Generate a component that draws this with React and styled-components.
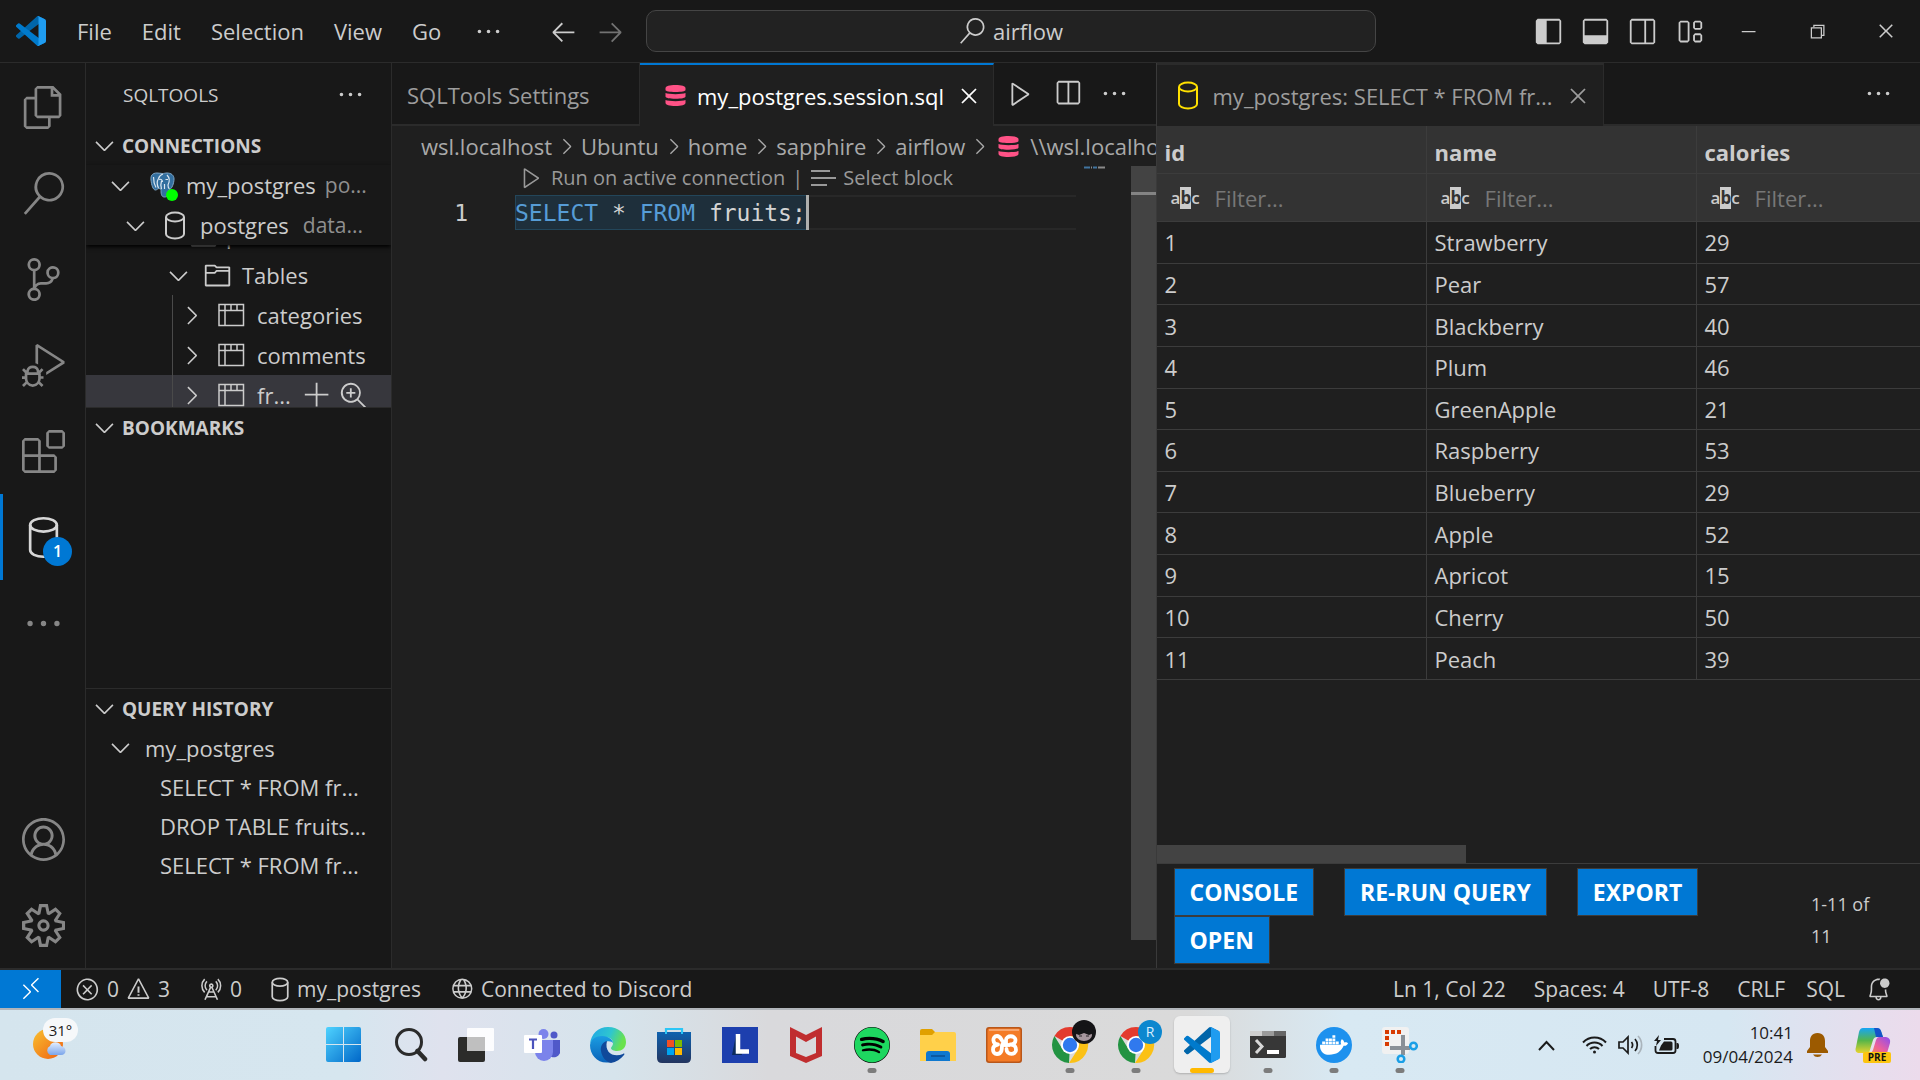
import React from 'react';
import styled, { createGlobalStyle, css } from 'styled-components';
import {
  VscAccount, VscAdd, VscArrowLeft, VscArrowRight, VscBellDot, VscChevronDown, VscChevronRight,
  VscChromeClose, VscChromeMinimize, VscChromeRestore, VscClose, VscDebugAlt,
  VscEllipsis, VscError, VscExtensions, VscFiles, VscFolder, VscGlobe, VscLayout, VscLayoutPanel,
  VscLayoutSidebarLeft, VscLayoutSidebarRightOff, VscPlay, VscRadioTower, VscRemote, VscSearch,
  VscSettingsGear, VscSourceControl, VscSplitHorizontal, VscWarning, VscZoomIn,
} from 'react-icons/vsc';
import { FaDocker, FaSpotify } from 'react-icons/fa';

const line = '#2b2b2b';
const dark = '#181818';
const editor = '#1f1f1f';
const accent = '#0078d4';
const text = '#cccccc';
const muted = '#9d9d9d';

const Global = createGlobalStyle`
  * { box-sizing: border-box; }
  body { margin: 0; background: ${dark}; color: ${text}; font-family: "Open Sans", "Noto Sans", sans-serif; font-size: 22px; overflow: hidden; }
  button, input { font: inherit; color: inherit; background: none; border: 0; padding: 0; margin: 0; }
  h2, h3, p, ul, nav { margin: 0; padding: 0; font-size: inherit; font-weight: inherit; }
  svg { display: block; flex: none; }
`;

const Screen = styled.div`
  height: 100vh;
  display: flex;
  flex-direction: column;
`;

/* ---------- title bar ---------- */
const TitleBar = styled.header`
  height: 63px;
  flex: none;
  display: flex;
  align-items: center;
  border-bottom: 1px solid ${line};
`;
const TitleSide = styled.div`
  flex: 1;
  display: flex;
  align-items: center;
  justify-content: ${(p) => (p.$end ? 'flex-end' : 'flex-start')};
`;
const Logo = styled.div`
  padding: 0 16px;
`;
const MenuItem = styled.button`
  padding: 0 ${(p) => (p.$icon ? 18 : 15)}px;
  height: 40px;
  display: flex;
  align-items: center;
`;
const TitleCenter = styled.div`
  display: flex;
  align-items: center;
  margin-right: 4px;
`;
const NavButton = styled.button`
  width: 47px;
  display: flex;
  justify-content: center;
  opacity: ${(p) => (p.disabled ? 0.5 : 1)};
`;
const CommandCenter = styled.button`
  width: 38vw;
  height: 42px;
  margin-left: 12px;
  display: flex;
  align-items: center;
  justify-content: center;
  gap: 8px;
  border: 1px solid #454545;
  border-radius: 10px;
  background: #222222;
`;
const LayoutButton = styled.button`
  width: 47px;
  display: flex;
  justify-content: center;
`;
const WindowButton = styled.button`
  width: 69px;
  display: flex;
  justify-content: center;
`;

/* ---------- work area ---------- */
const Work = styled.main`
  flex: 1;
  min-height: 0;
  display: flex;
`;
const ActivityBar = styled.nav`
  width: 86px;
  flex: none;
  display: flex;
  flex-direction: column;
  border-right: 1px solid ${line};
`;
const ActivityList = styled.div`
  padding-top: 1px;
  flex: 1;
  display: flex;
  flex-direction: column;
`;
const ActivityButton = styled.button`
  height: 86px;
  display: flex;
  align-items: center;
  justify-content: center;
  color: ${(p) => (p.$active ? '#d7d7d7' : '#868686')};
  border-left: 3px solid ${(p) => (p.$active ? accent : 'transparent')};
  padding-right: 2px;
  position: relative;
`;
const Badge = styled.span`
  position: absolute;
  left: 40px;
  top: 43px;
  width: 29px;
  height: 29px;
  border-radius: 50%;
  background: ${accent};
  color: #fff;
  font-size: 16px;
  font-weight: 600;
  line-height: 29px;
  text-align: center;
`;
const SideBar = styled.aside`
  width: 306px;
  flex: none;
  display: flex;
  flex-direction: column;
  border-right: 1px solid ${line};
`;
const SideTitle = styled.div`
  height: 63px;
  flex: none;
  display: flex;
  align-items: center;
  justify-content: space-between;
  padding: 0 26px 0 37px;
  font-size: 19px;
`;
const Pane = styled.section`
  flex: ${(p) => p.$flex || '1'};
  min-height: 0;
  overflow: hidden;
  border-top: ${(p) => (p.$first ? '0' : `1px solid ${line}`)};
`;
const PaneHeader = styled.h3`
  height: 39px;
  display: flex;
  align-items: center;
  padding-left: 4px;
  gap: 3px;
  font-size: 19px;
  font-weight: 700;
`;
const TreeRow = styled.div`
  height: 40px;
  display: flex;
  align-items: center;
  white-space: nowrap;
  gap: ${(p) => p.$gap || 9}px;
  padding-left: ${(p) => p.$indent}px;
  background: ${(p) => (p.$selected ? '#37373d' : 'transparent')};
`;
const History = styled.div`
  ${TreeRow} { height: 39px; }
`;
const Detail = styled.span`
  color: #8f8f8f;
  font-size: 21px;
`;
const RowActions = styled.div`
  display: flex;
  gap: 7px;
  button { display: flex; }
`;
const Sticky = styled.div`
  box-shadow: 0 2px 4px #000;
  position: relative;
  background: ${dark};
`;
const Peek = styled.div`
  height: 10px;
  overflow: hidden;
  display: flex;
  flex-direction: column;
  justify-content: flex-end;
  ${TreeRow} { flex: none; }
`;
const Children = styled.div`
  margin-left: 86px;
  border-left: 1px solid #4a4a4a;
`;
const GuideWrap = styled.div`
  background: linear-gradient(#37373d, #37373d) 0 80px / 100% 40px no-repeat;
`;

/* ---------- editors ---------- */
const Group = styled.section`
  flex: 1 1 0;
  min-width: 0;
  display: flex;
  flex-direction: column;
  background: ${editor};
  border-left: ${(p) => (p.$second ? `1px solid #3a3a3a` : '0')};
`;
const TabBar = styled.div`
  height: 63px;
  flex: none;
  display: flex;
  background: ${dark};
`;
const Tab = styled.div`
  display: flex;
  align-items: center;
  white-space: nowrap;
  height: 63px;
  border-right: 1px solid ${line};
  color: ${muted};
  ${(p) => p.$kind === 'plain' && css`
    width: 248px;
    padding: 2px 0 0 15px;
    border-bottom: 2px solid ${line};
  `}
  ${(p) => p.$kind === 'active' && css`
    width: 354px;
    padding: 0 11px 0 25px;
    gap: 11px;
    background: ${editor};
    color: #fff;
    border-top: 2px solid ${accent};
  `}
  ${(p) => p.$kind === 'result' && css`
    width: 447px;
    padding: 0 11px 0 17px;
    gap: 11px;
    background: ${editor};
    border-top: 2px solid ${line};
  `}
`;
const TabClose = styled.button`
  margin-left: auto;
  display: flex;
`;
const TabActions = styled.div`
  flex: 1;
  display: flex;
  align-items: center;
  justify-content: flex-end;
  gap: 18px;
  padding-right: 27px;
  border-bottom: 2px solid ${line};
  button { display: flex; }
`;
const Crumbs = styled.nav`
  height: 40px;
  flex: none;
  display: flex;
  align-items: center;
  gap: 2px;
  padding-left: 29px;
  overflow: hidden;
  white-space: nowrap;
  color: #a9a9a9;
`;
const CrumbFile = styled.span`
  display: flex;
  align-items: center;
  gap: 11px;
  padding-left: 4px;
`;
const EditorBody = styled.div`
  flex: 1;
  min-height: 0;
  display: flex;
`;
const Code = styled.div`
  flex: 1;
  min-width: 0;
`;
const Lens = styled.div`
  height: 29px;
  display: flex;
  align-items: center;
  gap: 7px;
  padding: 0 0 6px 127px;
  font-size: 20px;
  color: #999999;
  white-space: nowrap;
`;
const LensLink = styled.button`
  display: flex;
  align-items: center;
  gap: 7px;
`;
const CodeLine = styled.div`
  display: flex;
  height: 35px;
  font: 23px/36px "DejaVu Sans Mono", monospace;
`;
const LineNo = styled.span`
  width: 76px;
  text-align: right;
  margin-right: 47px;
`;
const LineBody = styled.div`
  flex: 1;
  display: flex;
  box-shadow: inset 0 2px #282828, inset 0 -2px #282828;
`;
const Selected = styled.span`
  white-space: pre;
  background: #1e2f3b;
  box-shadow: inset 0 1px #23465a, inset 0 -1px #23465a, inset 1px 0 #23465a;
  color: #d4d4d4;
  border-right: 3px solid #aeafad;
`;
const Keyword = styled.span`
  color: #569cd6;
`;
const Minimap = styled.div`
  width: 55px;
  padding-left: 8px;
`;
const VScroll = styled.div`
  width: 25px;
  margin-bottom: 28px;
  background: #434343;
  padding-top: 26px;
`;
const Mark = styled.div`
  height: 3px;
  background: #848484;
`;

/* ---------- result table ---------- */
const Results = styled.div`
  flex: 1;
  min-height: 0;
  overflow: hidden;
`;
const Table = styled.table`
  width: 100%;
  height: 554px;
  table-layout: fixed;
  border-collapse: separate;
  border-spacing: 0;
  text-align: left;
  line-height: 30px;
  th, td {
    padding: 0 8px;
    border-right: 1px solid #3c3c3c;
    border-bottom: 1px solid #3c3c3c;
  }
  th:last-child, td:last-child { border-right: 0; }
  thead th { background: #333333; height: 48px; font-weight: 700; padding-top: 4px; }
  thead tr + tr th { padding-top: 0; }
`;
const Col = styled.col`
  width: 270px;
`;
const FilterBox = styled.label`
  display: flex;
  align-items: center;
  gap: 15px;
  padding-left: 6px;
  font-weight: 400;
`;
const FilterInput = styled.input`
  width: 100px;
  min-width: 0;
  &::placeholder { color: #777777; opacity: 1; }
`;
const Abc = styled.span`
  display: flex;
  font-size: 17px;
  font-weight: 600;
  line-height: 22px;
  b { background: ${text}; color: #333333; font-weight: 700; }
`;
const HScroll = styled.div`
  height: 18px;
  width: 309px;
  flex: none;
  background: #434343;
`;
const Footer = styled.footer`
  flex: none;
  display: flex;
  align-items: center;
  padding: 4px 17px;
  border-top: 1px solid #3c3c3c;
`;
const Actions = styled.div`
  flex: 1;
  display: flex;
  flex-wrap: wrap;
  column-gap: 30px;
`;
const Action = styled.button`
  height: 48px;
  padding: 0 15px;
  border: 1px solid #3c3c3c;
  background: ${accent};
  color: #fff;
  font-size: 23px;
  font-weight: 700;
`;
const Count = styled.span`
  width: 92px;
  padding: 8px 16px 0 0;
  font-size: 18px;
  line-height: 32px;
`;

/* ---------- status bar ---------- */
const StatusBar = styled.div`
  height: 40px;
  flex: none;
  display: flex;
  align-items: stretch;
  border-top: 2px solid ${line};
  font-size: 21px;
`;
const Remote = styled.button`
  width: 61px;
  display: flex;
  align-items: center;
  justify-content: center;
  background: ${accent};
  color: #fff;
`;
const Status = styled.button`
  display: flex;
  align-items: center;
  gap: 7px;
  padding: 0 14px 0 ${(p) => (p.$tight ? 7 : 14)}px;
`;
const StatusRight = styled.div`
  margin-left: auto;
  display: flex;
  padding-right: 15px;
`;

/* ---------- taskbar ---------- */
const TaskBar = styled.footer`
  height: 72px;
  flex: none;
  display: grid;
  grid-template-columns: 316px auto 1fr;
  align-items: stretch;
  border-top: 2px solid #b1b5ba;
  color: #1b1b1b;
  background: linear-gradient(90deg, #d5e5ee 0%, #d6e6ef 18%, #dfe2ee 23%, #d6e4ec 32%, #d9d9dc 40%, #dadada 62%, #d8e9f3 70%, #d6e7f2 90%, #ecdbec 100%);
`;
const Weather = styled.button`
  width: 60px;
  margin-left: 26px;
  display: flex;
  align-items: center;
  position: relative;
`;
const Temp = styled.span`
  position: absolute;
  left: 17px;
  top: 8px;
  width: 35px;
  height: 24px;
  border-radius: 12px;
  background: #f6f8fa;
  font-size: 15px;
  line-height: 24px;
  text-align: center;
`;
const Apps = styled.div`
  display: flex;
  padding: 6px 0;
  gap: 10px;
`;
const AppButton = styled.button`
  width: 56px;
  height: 57px;
  border-radius: 6px;
  display: flex;
  align-items: center;
  justify-content: center;
  position: relative;
  background: ${(p) => (p.$active ? '#efefef' : 'transparent')};
  box-shadow: ${(p) => (p.$active ? '0 1px 2px #0003' : 'none')};
`;
const Dot = styled.i`
  position: absolute;
  bottom: 0;
  left: 50%;
  transform: translateX(-50%);
  width: ${(p) => (p.$wide ? 24 : 9)}px;
  height: 5px;
  border-radius: 3px;
  background: ${(p) => (p.$wide ? '#ffb900' : '#7c7c7c')};
`;
const Tray = styled.div`
  display: flex;
  align-items: center;
  justify-content: flex-end;
  padding-right: 29px;
`;
const TrayIcons = styled.div`
  display: flex;
  align-items: center;
  gap: 11px;
  margin-right: 24px;
`;
const Chevron = styled.button`
  padding-right: 16px;
`;
const Clock = styled.div`
  font-size: 17px;
  line-height: 24px;
  text-align: right;
  margin-right: 14px;
`;
const Copilot = styled.button`
  margin-left: 27px;
`;

/* ---------- drawings ---------- */
const CodeLogo = ({ size }) => (
  <svg width={size} height={size} viewBox="0 0 100 100" aria-hidden="true">
    <path fill="#0065a9" d="M96.5 10.8 75.9.9a6.2 6.2 0 0 0-7.1 1.200L1.300 63.600a4.200 4.200 0 0 0 0 6.100l5.500 5a4.200 4.200 0 0 0 5.300.3l81.200-61.700c2.800-2 6.700-.1 6.700 3.400v-.3a6.300 6.300 0 0 0-3.500-5.600Z" />
    <path fill="#007acc" d="m96.500 89.200-20.600 9.900a6.200 6.200 0 0 1-7.100-1.200L1.300 36.400a4.200 4.200 0 0 1 0-6.100l5.500-5a4.200 4.200 0 0 1 5.300-.3l81.200 61.700c2.800 2 6.700.1 6.700-3.400v.3a6.300 6.300 0 0 1-3.500 5.600Z" />
    <path fill="#1f9cf0" d="M75.900 99.100a6.200 6.200 0 0 1-7.100-1.200c2.300 2.300 6.200.7 6.200-2.600V4.700c0-3.300-3.900-4.900-6.200-2.600a6.200 6.200 0 0 1 7.100-1.200l20.600 9.900a6.200 6.200 0 0 1 3.500 5.600v67.200c0 2.400-1.400 4.600-3.500 5.600Z" />
  </svg>
);
const Cylinder = ({ w = 22, h = 29, color = 'currentColor', stroke = 2 }) => (
  <svg width={w} height={h} viewBox="0 0 22 29" fill="none" stroke={color} strokeWidth={stroke} aria-hidden="true">
    <ellipse cx="11" cy="6" rx="9" ry="4.500" />
    <path d="M2 6v17c0 2.500 4 4.500 9 4.500s9-2 9-4.500V6" />
  </svg>
);
const ElephantIcon = () => (
  <svg width="25" height="26" viewBox="0 0 25 26" aria-hidden="true">
    <path fill="#336f9f" stroke="#7fa6c6" strokeWidth="1" d="M7 1C2 1 .5 4 1 8c.5 5 2 10 4.500 10 1.500 0 2-1.500 3.500-1.500.5 0 1 .5 2 .5 0 4 0 8 3.500 8s4-3 4.500-7c3-1 5-7 5-11 0-4-3-6-7-6-2 0-3 .5-4.500.5S9 1 7 1Z" />
    <path fill="none" stroke="#dbe7f1" strokeWidth="1.200" d="M8.500 16c-1.500-3-1.500-7 0-9.500C9.500 3.500 11 2.500 13 2M11.500 17c-1-3-1-5 0-8M17 3c3 3 2.500 7 1 10 0 2 .5 3.500 1.500 4M9 7.500c2-.8 3.500.5 3.500 2.500M15.500 7.500h2.500M3.500 5c0 4 1 8 2.500 10.500M14.500 12v5" />
  </svg>
);
const SqlIcon = () => (
  <svg width="21" height="21" viewBox="0 0 20 21" fill="#ff5286" aria-hidden="true">
    <path d="M0 3c0-1.700 4-3 10-3s10 1.300 10 3v2c0 1.300-4 2-10 2S0 6.300 0 5z" />
    <path d="M0 8c3 1.500 17 1.500 20 0v3.500c0 1.500-4 2.200-10 2.200S0 13 0 11.500z" />
    <path d="M0 15c3 1.500 17 1.500 20 0v3c0 1.700-4 3-10 3S0 19.700 0 18z" />
  </svg>
);
const TableIcon = () => (
  <svg width="27" height="24" viewBox="0 0 27 24" fill="none" stroke="currentColor" strokeWidth="1.500" aria-hidden="true">
    <path d="M1 1.500h24.500v21H1zM1 7.500h24.500M7 1.500v21M13 1.500v6M19 1.500v6" />
  </svg>
);
const LinesIcon = () => (
  <svg width="26" height="18" viewBox="0 0 26 18" stroke="currentColor" strokeWidth="2" aria-hidden="true">
    <path d="M1 2h19M1 9h25M1 16h16" />
  </svg>
);
const MapLine = () => (
  <svg width="21" height="3" viewBox="0 0 21 3" aria-hidden="true">
    <path d="M0 1.500h6M9 1.500h4" stroke="#41749f" strokeWidth="2" />
    <path d="M7 1.500h1M14 1.500h7" stroke="#8a8a8a" strokeWidth="2" />
  </svg>
);
const Pg = styled.span`
  position: relative;
  margin: 0 2px 0 6px;
`;
const Online = styled.i`
  position: absolute;
  right: -3px;
  bottom: -3px;
  width: 12px;
  height: 12px;
  border-radius: 50%;
  background: #00ff00;
`;
const WeatherIcon = () => (
  <svg width="40" height="40" viewBox="0 0 40 40" aria-hidden="true">
    <defs>
      <linearGradient id="sun" x1="0" y1="0" x2="1" y2="1"><stop offset="0" stopColor="#f8c12f" /><stop offset="1" stopColor="#ef5f12" /></linearGradient>
      <linearGradient id="cloud" x1="0" y1="0" x2="0" y2="1"><stop offset="0" stopColor="#e3efff" /><stop offset="1" stopColor="#7ba5ea" /></linearGradient>
    </defs>
    <circle cx="22" cy="19" r="15" fill="url(#sun)" />
    <path d="M24 30a5 5 0 0 1 0-9c1-5 10-5 11 0 6 1 6 9 0 9z" fill="url(#cloud)" />
  </svg>
);
const icon36 = { width: 36, height: 36, viewBox: '0 0 36 36', 'aria-hidden': true };
const StartIcon = () => (
  <svg {...icon36}>
    <defs><linearGradient id="win" x1="0" y1="0" x2="1" y2="1"><stop offset="0" stopColor="#4fd3ff" /><stop offset="1" stopColor="#0067c8" /></linearGradient></defs>
    <path fill="url(#win)" d="M2 0h15v17H0V2q0-2 2-2ZM18 0h15q2 0 2 2v15H18ZM0 18h17v17H2q-2 0-2-2ZM18 18h17v15q0 2-2 2H18Z" />
  </svg>
);
const FindIcon = () => (
  <svg {...icon36} fill="none" stroke="#2b2b2b"><circle cx="17" cy="15" r="12.500" strokeWidth="3" /><path d="m25.500 24 7.500 8" strokeWidth="4.500" strokeLinecap="round" /></svg>
);
const TaskViewIcon = () => (
  <svg {...icon36}>
    <rect x="0" y="10" width="27" height="25" rx="2" fill="#2c2c2a" />
    <rect x="9" y="1" width="27" height="23" rx="1" fill="#fff" opacity=".9" />
    <rect x="9" y="10" width="18" height="14" fill="#bfbfbf" />
  </svg>
);
const TeamsIcon = () => (
  <svg {...icon36}>
    <circle cx="19.500" cy="7" r="5" fill="#7b83eb" /><circle cx="30" cy="8" r="3.500" fill="#5059c9" />
    <path d="M24 13h12v9a6 6 0 0 1-12 4z" fill="#5059c9" />
    <path d="M11 13h18v12a9 9 0 0 1-18 0z" fill="#7b83eb" />
    <rect x="0" y="8" width="18" height="18" rx="1" fill="#fff" />
    <path d="M5 12.500h8M9 12.500v9.500" stroke="#4b53bc" strokeWidth="2.200" />
  </svg>
);
const EdgeIcon = () => (
  <svg {...icon36}>
    <defs>
      <linearGradient id="e1" x1="0" y1="0" x2="1" y2=".3"><stop offset="0" stopColor="#1ea5e8" /><stop offset=".6" stopColor="#2fc6cf" /><stop offset="1" stopColor="#69e24d" /></linearGradient>
      <linearGradient id="e2" x1="0" y1="0" x2="0" y2="1"><stop offset="0" stopColor="#1b9de2" /><stop offset="1" stopColor="#0a62b8" /></linearGradient>
    </defs>
    <path fill="url(#e1)" d="M0 17C1 7 8 0 18 0c11 0 18 7 18 15 0 6-4 9-9 9-3 0-6-1-6-3 0-1 2-2 2-5 0-4-4-6-9-6C7 10 2 13 0 17Z" />
    <path fill="url(#e2)" d="M0 18c1-6 6-9 12-9 7 0 11 4 11 7-1-2-9-4-10 4-1 6 2 12 8 15C9 38 0 29 0 18Z" />
    <path fill="#10499a" d="M17 14c-4 1-7 5-6 10 1 6 5 11 10 12 5-1 10-4 13-8 1-1 0-2-1-1-9 4-19-1-16-13Z" />
  </svg>
);
const StoreIcon = () => (
  <svg {...icon36}>
    <defs><linearGradient id="st" x1="0" y1="0" x2="0" y2="1"><stop offset="0" stopColor="#0f62af" /><stop offset="1" stopColor="#23355f" /></linearGradient></defs>
    <path d="M10 7V2h16v5" fill="none" stroke="#2cc6f6" strokeWidth="2.200" />
    <path fill="url(#st)" d="M1 5h34v26q0 5-5 5H6q-5 0-5-5z" />
    <path d="M10 2v5M26 2v5" stroke="#2cc6f6" strokeWidth="2" />
    <path fill="#f25022" d="M11 13h7v7h-7z" /><path fill="#7fba00" d="M19 13h7v7h-7z" /><path fill="#00a4ef" d="M11 21h7v7h-7z" /><path fill="#ffb900" d="M19 21h7v7h-7z" />
  </svg>
);
const LIcon = () => (
  <svg {...icon36}><path fill="#1d3fae" d="M0 0h36v36H0z" /><path fill="#0b2b5e" d="m14 8-4 20h10z" /><path fill="none" stroke="#fff" strokeWidth="4.500" d="M16 7v17.500h11" /></svg>
);
const ShieldIcon = () => (
  <svg {...icon36}><path fill="#c02d2f" fillRule="evenodd" d="m2 0 16 8 16-8v29l-16 7-16-7zM8 9.500V26l10 4 10-4V9.500L18 15z" /></svg>
);
const FolderIcon = () => (
  <svg {...icon36}>
    <path fill="#e0a000" d="M0 4q0-2 2-2h10l3 3v5H0z" /><path fill="#ffd04a" d="M0 8h12l3-3h19q2 0 2 2v27H0z" />
    <path fill="#0f78cf" d="M6 34v-7q0-3 3-3h18q3 0 3 3v7z" /><path d="M11 29h14" stroke="#0b4f92" strokeWidth="1.500" />
  </svg>
);
const XamppIcon = () => (
  <svg {...icon36}>
    <rect width="36" height="36" rx="3" fill="#b9571a" /><rect x="1.500" y="1.500" width="33" height="33" rx="2" fill="#f47b26" />
    <path d="M3 2h30v2H3z" fill="#f9a66e" />
    <path d="M12 17.500c-6 0-6-8.500-1-8.500 4 0 4 4 6.500 6.500M12 17.500c-7 1-6 9.500-1 9.500 5 0 5-5 5-9M20 18v-5c0-5 9.500-5 9.500 0 0 3-2.500 4.500-6 4.500 6 0 6.500 3 6.500 5.500 0 5-9.500 5.500-9.500-1" fill="none" stroke="#fff" strokeWidth="3.800" strokeLinecap="round" />
    <path d="M15 18h9" stroke="#fff" strokeWidth="3.800" />
  </svg>
);
const ChromeIcon = ({ avatar }) => (
  <svg width="36" height="36" viewBox="0 0 36 36" overflow="visible" aria-hidden="true">
    <path fill="#e33b2e" d="M18 18 2.400 9a18 18 0 0 1 31.200 0z" />
    <path fill="#229342" d="M18 18 17 36A18 18 0 0 1 2.400 9l8 13z" />
    <path fill="#fbc116" d="M18 9h15.600A18 18 0 0 1 17 36l9-14z" />
    <circle cx="18" cy="18" r="9" fill="#fff" /><circle cx="18" cy="18" r="7.200" fill="#3079ee" />
    {avatar === 'R' ? (
      <g><circle cx="32" cy="5" r="12" fill="#0c87cf" /><text x="32" y="10" fontSize="14" fill="#d9f0ff" textAnchor="middle">R</text></g>
    ) : (
      <g><circle cx="32" cy="5" r="12" fill="#151417" /><ellipse cx="32" cy="8" rx="8" ry="6" fill="#a8979f" /><path fill="#151417" d="M22 6c2-10 18-10 20 0l-5 2-5-2-5 2z" /><path stroke="#2c262b" strokeWidth="1" d="M27 9h3M34 9h3" /></g>
    )}
  </svg>
);
const TerminalIcon = () => (
  <svg {...icon36}>
    <rect y="4" width="36" height="27" rx="1.500" fill="#373737" /><path fill="#cfcfcf" d="M0 4h12v5H0z" /><path fill="#9b9b9b" d="M12 4h12v5H12z" /><path fill="#666" d="M24 4h12v5H24z" />
    <path d="m6 13 6 6.500L6 26" fill="none" stroke="#d8d8d8" strokeWidth="3" /><path d="M17 25h12" stroke="#fff" strokeWidth="4" />
  </svg>
);
const Disc = styled.span`
  width: 36px;
  height: 36px;
  border-radius: 50%;
  display: flex;
  align-items: center;
  justify-content: center;
  background: ${(p) => p.$bg};
  color: ${(p) => p.$fg};
`;
const SnipIcon = () => (
  <svg {...icon36}>
    <rect width="27" height="27" rx="3" fill="#f1f1f1" />
    <path d="M3 5h16M5 9v10" fill="none" stroke="#d83b01" strokeWidth="4" strokeDasharray="4 2" />
    <path d="M8 21h20M21 8v20" stroke="#8a9097" strokeWidth="4" />
    <circle cx="31.500" cy="19" r="3.300" fill="none" stroke="#1a9fe6" strokeWidth="2.500" /><circle cx="19" cy="32" r="3.300" fill="none" stroke="#1a9fe6" strokeWidth="2.500" />
  </svg>
);
const CopilotIcon = () => (
  <svg width="36" height="36" viewBox="0 0 36 36" aria-hidden="true">
    <defs>
      <linearGradient id="c1" x1="0" y1="0" x2="0" y2="1"><stop offset="0" stopColor="#16a5f5" /><stop offset=".5" stopColor="#56b64a" /><stop offset="1" stopColor="#e8d32e" /></linearGradient>
      <linearGradient id="c2" x1="1" y1="0" x2="0" y2="1"><stop offset="0" stopColor="#8b4df0" /><stop offset=".6" stopColor="#ec5f9d" /><stop offset="1" stopColor="#f98a4b" /></linearGradient>
    </defs>
    <path fill="url(#c1)" d="M8 1h14q3 0 4 3l2 6h-6q-3 0-4 3l-4 13H5q-6 0-4-6L4 5q1-4 4-4z" />
    <path fill="#1452c9" d="M19 1h3q3 0 4 3l2 6h-7z" />
    <path fill="url(#c2)" d="M24 10h7q5 1 4 6l-3 10H15q2 0 3-3l3-10q1-3 3-3z" />
    <rect x="8" y="25" width="28" height="11" rx="2" fill="#fcc510" />
    <text x="22" y="34" fontSize="10" fontWeight="700" textAnchor="middle" fill="#111">PRE</text>
  </svg>
);
const tray = { fill: 'none', stroke: '#1b1b1b', strokeWidth: 2, 'aria-hidden': true };
const UpIcon = () => <svg width="17" height="11" viewBox="0 0 17 11" {...tray}><path d="m1 10 7.500-8L16 10" /></svg>;
const WifiIcon = () => (
  <svg width="25" height="18" viewBox="0 0 25 18" {...tray}><path d="M1 6.500a16 16 0 0 1 23 0M4.500 10a11 11 0 0 1 16 0M8 13a6.500 6.500 0 0 1 9 0" /><circle cx="12.500" cy="16" r="1.500" fill="#1b1b1b" stroke="none" /></svg>
);
const SoundIcon = () => (
  <svg width="25" height="20" viewBox="0 0 25 20" {...tray} strokeWidth="1.700"><path d="M1 7h4l5-5v16l-5-5H1zM13.500 7a5 5 0 0 1 0 6M17 4a9 9 0 0 1 0 12" /><path d="M20 1a13 13 0 0 1 0 18" stroke="#aab4bc" /></svg>
);
const BatteryIcon = () => (
  <svg width="25" height="20" viewBox="0 0 25 20" {...tray} strokeWidth="1.800"><path d="M10 4h9q2.500 0 2.500 2.500v9q0 2.500-2.500 2.500H4q-2.500 0-2.500-2.500V11" /><path fill="#1b1b1b" stroke="none" d="M10 6.500h7q1.500 0 1.500 1.500v6q0 1.500-1.500 1.500H5l2-5zM22.500 8h1q1.500 0 1.500 3t-1.500 3h-1zM5 0 0 6h3l-1 5 5-6H4z" /></svg>
);
const BellIcon = () => (
  <svg width="21" height="24" viewBox="0 0 21 24" fill="#9c5a00" aria-hidden="true"><path d="M10.500 0C5 0 3 4 3 8v6l-3 4v2h21v-2l-3-4V8c0-4-2-8-7.500-8zM6 21.500h9q-1.500 2.500-4.500 2.500T6 21.500z" /></svg>
);

/* ---------- data ---------- */
const menu = ['File', 'Edit', 'Selection', 'View', 'Go'];
const path = ['wsl.localhost', 'Ubuntu', 'home', 'sapphire', 'airflow'];
const columns = ['id', 'name', 'calories'];
const fruits = [
  ['Strawberry', 29], ['Pear', 57], ['Blackberry', 40], ['Plum', 46], ['GreenApple', 21], ['Raspberry', 53],
  ['Blueberry', 29], ['Apple', 52], ['Apricot', 15], ['Cherry', 50], ['Peach', 39],
];
const activities = [
  ['Explorer', VscFiles], ['Search', VscSearch], ['Source Control', VscSourceControl], ['Run and Debug', VscDebugAlt], ['Extensions', VscExtensions],
];
const history = ['SELECT * FROM fr...', 'DROP TABLE fruits...', 'SELECT * FROM fr...'];
const apps = [
  ['Start', <StartIcon />], ['Search', <FindIcon />], ['Task View', <TaskViewIcon />], ['Teams', <TeamsIcon />], ['Edge', <EdgeIcon />],
  ['Store', <StoreIcon />], ['L', <LIcon />], ['McAfee', <ShieldIcon />],
  ['Spotify', <Disc $bg="#000" $fg="#1ed760"><FaSpotify size={36} /></Disc>, 1],
  ['File Explorer', <FolderIcon />], ['XAMPP', <XamppIcon />], ['Chrome', <ChromeIcon />, 1], ['Chrome R', <ChromeIcon avatar="R" />, 1],
  ['Visual Studio Code', <CodeLogo size={36} />, 2], ['Terminal', <TerminalIcon />, 1],
  ['Docker', <Disc $bg="#1d91ee" $fg="#fff"><FaDocker size={28} /></Disc>, 1], ['Snipping Tool', <SnipIcon />, 1],
];

export default function App() {
  return (
    <Screen>
      <Global />
      <TitleBar>
        <TitleSide>
          <Logo><CodeLogo size={30} /></Logo>
          {menu.map((m) => <MenuItem key={m}>{m}</MenuItem>)}
          <MenuItem $icon aria-label="More menus"><VscEllipsis size={29} /></MenuItem>
        </TitleSide>
        <TitleCenter>
          <NavButton aria-label="Back"><VscArrowLeft size={29} /></NavButton>
          <NavButton aria-label="Forward" disabled><VscArrowRight size={29} /></NavButton>
          <CommandCenter><VscSearch size={26} />airflow</CommandCenter>
        </TitleCenter>
        <TitleSide $end>
          <LayoutButton aria-label="Primary side bar"><VscLayoutSidebarLeft size={29} /></LayoutButton>
          <LayoutButton aria-label="Panel"><VscLayoutPanel size={29} /></LayoutButton>
          <LayoutButton aria-label="Secondary side bar"><VscLayoutSidebarRightOff size={29} /></LayoutButton>
          <LayoutButton aria-label="Customize layout"><VscLayout size={29} /></LayoutButton>
          <WindowButton aria-label="Minimize"><VscChromeMinimize size={20} /></WindowButton>
          <WindowButton aria-label="Restore"><VscChromeRestore size={20} /></WindowButton>
          <WindowButton aria-label="Close"><VscChromeClose size={20} /></WindowButton>
        </TitleSide>
      </TitleBar>

      <Work>
        <ActivityBar>
          <ActivityList>
            {activities.map(([name, Icon]) => <ActivityButton key={name} aria-label={name}><Icon size={43} /></ActivityButton>)}
            <ActivityButton $active aria-label="SQLTools">
              <Cylinder w={33} h={43} stroke={1.8} />
              <Badge>1</Badge>
            </ActivityButton>
            <ActivityButton aria-label="More views"><VscEllipsis size={43} /></ActivityButton>
          </ActivityList>
          <ActivityButton aria-label="Accounts"><VscAccount size={43} /></ActivityButton>
          <ActivityButton aria-label="Manage"><VscSettingsGear size={43} /></ActivityButton>
        </ActivityBar>

        <SideBar>
          <SideTitle><h2>SQLTOOLS</h2><VscEllipsis size={29} /></SideTitle>
          <Pane $first $flex="0 0 281px">
            <PaneHeader><VscChevronDown size={29} />CONNECTIONS</PaneHeader>
            <Sticky>
              <TreeRow $indent={20}>
                <VscChevronDown size={29} />
                <Pg><ElephantIcon /><Online /></Pg>
                <span>my_postgres</span><Detail>po...</Detail>
              </TreeRow>
              <TreeRow $indent={35} $gap={14}>
                <VscChevronDown size={29} /><Cylinder />
                <span>postgres</span><Detail>data...</Detail>
              </TreeRow>
            </Sticky>
            <Peek>
              <TreeRow $indent={66} $gap={8}><VscChevronRight size={29} /><VscFolder size={29} /><span>public</span></TreeRow>
            </Peek>
            <TreeRow $indent={78} $gap={10}><VscChevronDown size={29} /><VscFolder size={29} /><span>Tables</span></TreeRow>
            <GuideWrap>
              <Children>
                <TreeRow $indent={4} $gap={12}><VscChevronRight size={29} /><TableIcon /><span>categories</span></TreeRow>
                <TreeRow $indent={4} $gap={12}><VscChevronRight size={29} /><TableIcon /><span>comments</span></TreeRow>
                <TreeRow $indent={4} $gap={12} $selected>
                  <VscChevronRight size={29} /><TableIcon /><span>fr...</span>
                  <RowActions>
                    <button aria-label="Insert"><VscAdd size={29} /></button>
                    <button aria-label="Show records"><VscZoomIn size={29} /></button>
                  </RowActions>
                </TreeRow>
              </Children>
            </GuideWrap>
          </Pane>
          <Pane $flex="0 0 281px"><PaneHeader><VscChevronDown size={29} />BOOKMARKS</PaneHeader></Pane>
          <Pane>
            <PaneHeader><VscChevronDown size={29} />QUERY HISTORY</PaneHeader>
            <History>
              <TreeRow $indent={20} $gap={10}><VscChevronDown size={29} />my_postgres</TreeRow>
              {history.map((q, i) => <TreeRow key={i} $indent={74}>{q}</TreeRow>)}
            </History>
          </Pane>
        </SideBar>

        <Group>
          <TabBar>
            <Tab $kind="plain">SQLTools Settings</Tab>
            <Tab $kind="active"><SqlIcon />my_postgres.session.sql<TabClose aria-label="Close tab"><VscClose size={28} /></TabClose></Tab>
            <TabActions>
              <button aria-label="Run"><VscPlay size={29} /></button>
              <button aria-label="Split editor"><VscSplitHorizontal size={29} /></button>
              <button aria-label="More actions"><VscEllipsis size={29} /></button>
            </TabActions>
          </TabBar>
          <Crumbs>
            {path.map((p) => <React.Fragment key={p}><span>{p}</span><VscChevronRight size={25} /></React.Fragment>)}
            <CrumbFile><SqlIcon />\\wsl.localhost</CrumbFile>
          </Crumbs>
          <EditorBody>
            <Code>
              <Lens>
                <LensLink><VscPlay size={25} />Run on active connection</LensLink>|
                <LensLink><LinesIcon />Select block</LensLink>
              </Lens>
              <CodeLine>
                <LineNo>1</LineNo>
                <LineBody><Selected><Keyword>SELECT</Keyword> * <Keyword>FROM</Keyword> fruits;</Selected></LineBody>
              </CodeLine>
            </Code>
            <Minimap><MapLine /></Minimap>
            <VScroll><Mark /></VScroll>
          </EditorBody>
        </Group>

        <Group $second>
          <TabBar>
            <Tab $kind="result">
              <Cylinder color="#ffe000" w={28} />
              my_postgres: SELECT * FROM fr...
              <TabClose aria-label="Close results"><VscClose size={28} /></TabClose>
            </Tab>
            <TabActions><button aria-label="More actions"><VscEllipsis size={29} /></button></TabActions>
          </TabBar>
          <Results>
            <Table>
              <colgroup><Col /><Col /><col /></colgroup>
              <thead>
                <tr>{columns.map((c) => <th key={c}>{c}</th>)}</tr>
                <tr>
                  {columns.map((c) => (
                    <th key={c}>
                      <FilterBox>
                        <Abc aria-hidden="true">a<b>b</b>c</Abc>
                        <FilterInput placeholder="Filter..." aria-label={`Filter ${c}`} />
                      </FilterBox>
                    </th>
                  ))}
                </tr>
              </thead>
              <tbody>
                {fruits.map(([name, cal], i) => <tr key={name}><td>{i + 1}</td><td>{name}</td><td>{cal}</td></tr>)}
              </tbody>
            </Table>
          </Results>
          <HScroll />
          <Footer>
            <Actions>
              <Action>CONSOLE</Action><Action>RE-RUN QUERY</Action><Action>EXPORT</Action><Action>OPEN</Action>
            </Actions>
            <Count>1-11 of 11</Count>
          </Footer>
        </Group>
      </Work>

      <StatusBar>
        <Remote aria-label="Remote"><VscRemote size={26} /></Remote>
        <Status><VscError size={25} />0<VscWarning size={25} />3</Status>
        <Status><VscRadioTower size={25} />0</Status>
        <Status><Cylinder w={20} h={25} />my_postgres</Status>
        <Status><VscGlobe size={25} />Connected to Discord</Status>
        <StatusRight>
          <Status>Ln 1, Col 22</Status><Status>Spaces: 4</Status><Status>UTF-8</Status><Status>CRLF</Status><Status $tight>SQL</Status>
          <Status $tight aria-label="Notifications"><VscBellDot size={25} /></Status>
        </StatusRight>
      </StatusBar>

      <TaskBar>
        <Weather aria-label="Weather"><WeatherIcon /><Temp>31°</Temp></Weather>
        <Apps>
          {apps.map(([name, icon, state]) => (
            <AppButton key={name} aria-label={name} $active={state === 2}>
              {icon}{state && <Dot $wide={state === 2} />}
            </AppButton>
          ))}
        </Apps>
        <Tray>
          <TrayIcons><Chevron aria-label="Hidden icons"><UpIcon /></Chevron><WifiIcon /><SoundIcon /><BatteryIcon /></TrayIcons>
          <Clock>10:41<br />09/04/2024</Clock>
          <BellIcon />
          <Copilot aria-label="Copilot"><CopilotIcon /></Copilot>
        </Tray>
      </TaskBar>
    </Screen>
  );
}
